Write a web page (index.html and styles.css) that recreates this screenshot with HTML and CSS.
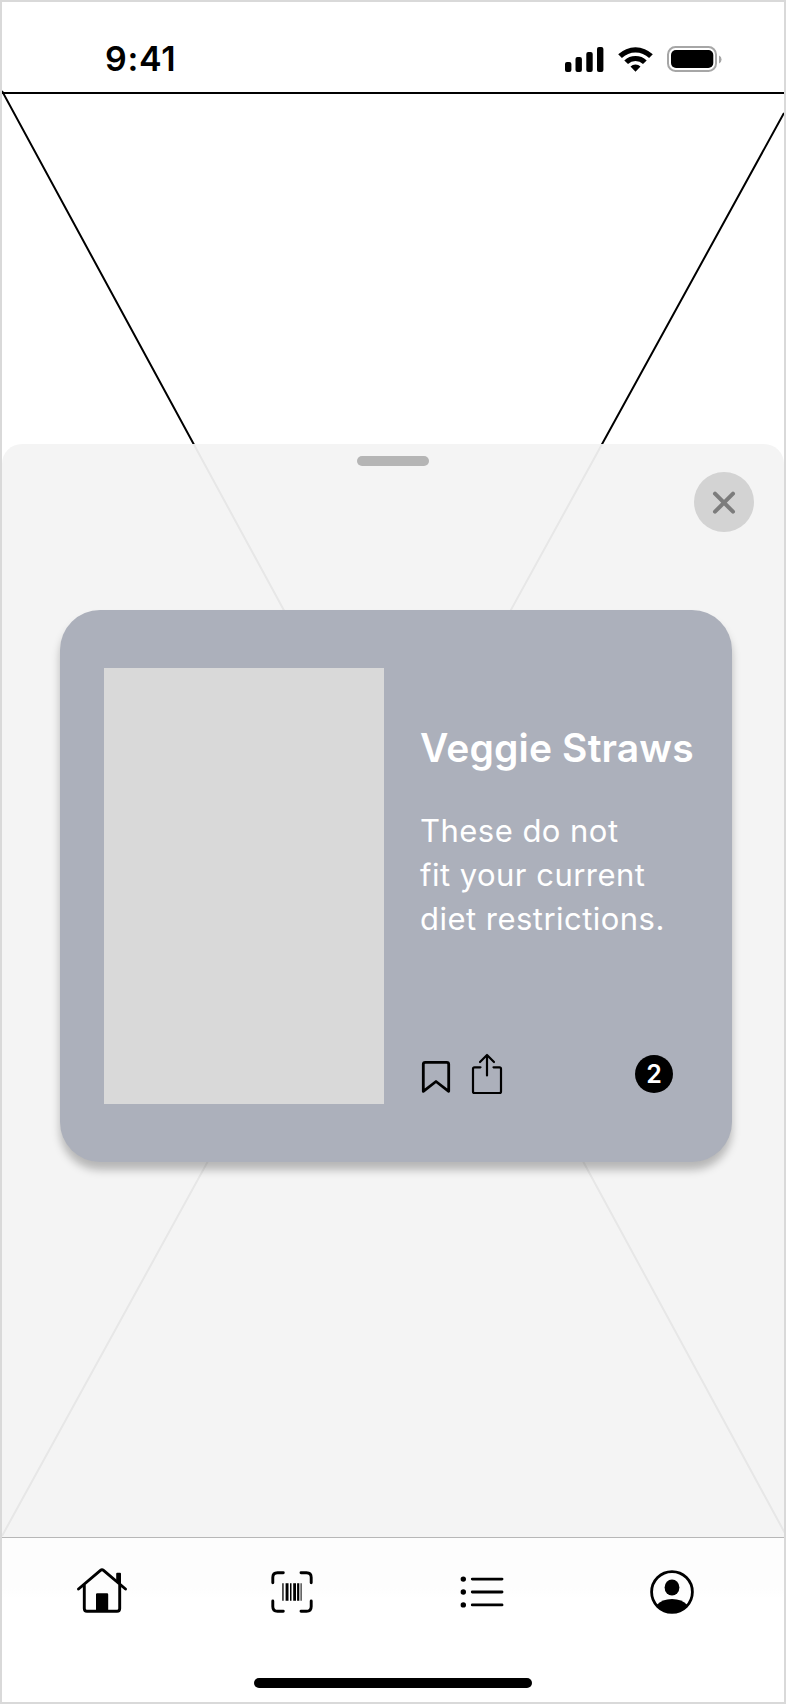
FILE: index.html
```html
<!DOCTYPE html>
<html lang="en">
<head>
<meta charset="utf-8">
<title>Scan result</title>
<link rel="stylesheet" href="styles.css">
</head>
<body>
<div class="phone">
  <svg class="backdrop" viewBox="2 2 782 1700" fill="none" stroke="#000" stroke-width="2">
    <path d="M2 93H784M2 91L787 1537M2 1536L784 113"/>
  </svg>
  <header class="status">
    <span class="time">9:41</span>
    <svg class="status-icons" width="160" height="30" viewBox="564 44 160 30">
      <rect x="565" y="62" width="6.4" height="10" rx="2"/>
      <rect x="575.5" y="57" width="6.4" height="15" rx="2"/>
      <rect x="586.3" y="52" width="6.4" height="20" rx="2"/>
      <rect x="597" y="47" width="6.4" height="25" rx="2"/>
      <path d="M618.2 54.3a25 25 0 0 1 34.6 0l-3.7 3.7a19.6 19.6 0 0 0-27.2 0zM624.3 60.4a16.2 16.2 0 0 1 22.4 0l-3.7 3.7a10.9 10.9 0 0 0-15 0zM630.5 66.4a7.5 7.5 0 0 1 10 0l-5 5.4z"/>
      <rect x="668" y="47" width="48" height="24" rx="7.5" fill="none" stroke="#a6a6a6" stroke-width="2"/>
      <rect x="671" y="50" width="42.3" height="18" rx="5"/>
      <path d="M719 55.5a4.4 4.4 0 0 1 0 8z" fill="#a6a6a6"/>
    </svg>
  </header>
  <main class="sheet">
    <div class="grabber"></div>
    <button class="close" aria-label="Close">
      <svg width="24" height="24" viewBox="0 0 24 24" stroke="#7c7c7c" stroke-width="4" stroke-linecap="round"><path d="M3 3.7L21 21.7M21 3.7L3 21.7"/></svg>
    </button>
    <article class="card">
      <div class="photo"></div>
      <div class="info">
        <h1 class="title">Veggie Straws</h1>
        <p class="text">These do not<br>fit your current<br>diet restrictions.</p>
        <div class="actions">
          <svg class="icon" width="82" height="42" viewBox="421 1053 82 42" fill="none" stroke="#000" stroke-linecap="round" stroke-linejoin="round">
            <path stroke-width="2.8" d="M423.3 1091.3V1064.3Q423.3 1062.3 425.3 1062.3H446.7Q448.7 1062.3 448.7 1064.3V1091.3L436 1081.5Z"/>
            <path stroke-width="2.2" d="M480.5 1067.3H474.5Q473 1067.3 473 1068.8V1091.5Q473 1093 474.5 1093H499.5Q501 1093 501 1091.5V1068.8Q501 1067.3 499.5 1067.3H493.5M487 1075.5V1055M480 1062L487 1055L494 1062"/>
          </svg>
          <span class="badge">2</span>
        </div>
      </div>
    </article>
  </main>
  <nav class="tabs">
    <svg class="tab" width="50" height="50" viewBox="77 1566 50 50" fill="none" stroke="#000" stroke-width="2.9" stroke-linecap="round" stroke-linejoin="round">
      <path d="M78.5 1589L100.5 1570.3Q102 1569 103.5 1570.3L125.5 1589M84.3 1584.5V1608.5Q84.3 1611.3 87 1611.3H117Q119.7 1611.3 119.7 1608.5V1584.5"/>
      <path fill="#000" stroke="none" d="M96 1594.5Q96 1593.3 97.2 1593.3H107Q108.2 1593.3 108.2 1594.5V1611.5H96ZM116.2 1573.7Q116.2 1572.7 117.2 1572.7H120Q121 1572.7 121 1573.7V1585L116.2 1581Z"/>
    </svg>
    <svg class="tab" width="50" height="50" viewBox="267 1566 50 50" fill="none" stroke="#000" stroke-width="2.9" stroke-linecap="round">
      <path d="M272.8 1582.8V1577.5Q272.8 1572.8 277.5 1572.8H283.3M301 1572.8H306.5Q311.2 1572.8 311.2 1577.5V1582.8M311.2 1601V1606.5Q311.2 1611.3 306.5 1611.3H301M283.3 1611.3H277.5Q272.8 1611.3 272.8 1606.5V1601"/>
      <path fill="#000" stroke="none" d="M282.3 1583.3h1.3v17.4h-1.3zM285.6 1583.3h2.9v17.4h-2.9zM290 1583.3h1.5v17.4h-1.5zM293.2 1583.3h2.8v17.4h-2.8zM297.1 1583.3h2.2v17.4h-2.2zM300.6 1583.3h1v17.4h-1z"/>
    </svg>
    <svg class="tab" width="50" height="50" viewBox="457 1566 50 50" stroke="#000" stroke-width="2.9" stroke-linecap="round">
      <path d="M472.3 1579.1H502M472.3 1592H502M472.3 1604.9H502"/>
      <g stroke="none"><circle cx="463.3" cy="1579.1" r="2.7"/><circle cx="463.3" cy="1592" r="2.7"/><circle cx="463.3" cy="1604.9" r="2.7"/></g>
    </svg>
    <svg class="tab" width="50" height="50" viewBox="647 1566 50 50">
      <circle cx="672" cy="1592" r="20.4" fill="none" stroke="#000" stroke-width="2.8"/>
      <ellipse cx="672" cy="1587.5" rx="7.4" ry="8.1"/>
      <path d="M656.5 1605.2Q662 1599 672 1599T687.5 1605.2A20.4 20.4 0 0 1 656.5 1605.2Z"/>
    </svg>
    <div class="home-indicator"></div>
  </nav>
</div>
</body>
</html>
```
FILE: styles.css
```css
* { box-sizing: border-box; }
body { margin: 0; font-family: Inter, "Liberation Sans", sans-serif; }
.phone {
  position: relative;
  display: flex;
  flex-direction: column;
  width: 786px;
  height: 1704px;
  border: 2px solid #d9d9d9;
  background: #fff;
  overflow: hidden;
}
.backdrop { position: absolute; inset: 0; width: 782px; height: 1700px; }
.status {
  position: relative;
  display: flex;
  justify-content: space-between;
  align-items: flex-start;
  height: 442px;
  padding: 42px 60px 0 103px;
}
.time { font-size: 34px; line-height: 30px; font-weight: 600; letter-spacing: .7px; }
.status-icons { display: block; }
.sheet {
  position: relative;
  display: flex;
  flex-direction: column;
  height: 1093px;
  padding: 12px 28px 0 58px;
  border-radius: 20px 20px 0 0;
  background: rgba(243, 243, 243, .95);
}
.grabber { width: 72px; height: 10px; margin-left: 297px; border-radius: 5px; background: #b5b5b5; }
.close {
  display: grid;
  place-items: center;
  align-self: flex-end;
  width: 60px;
  height: 60px;
  margin-top: 6px;
  margin-right: 2px;
  padding: 0;
  border: 0;
  border-radius: 50%;
  background: #d3d3d3;
}
.card {
  display: flex;
  gap: 36px;
  width: 672px;
  height: 552px;
  margin-top: 78px;
  padding: 58px 44px;
  border-radius: 40px;
  background: #acb0bb;
  box-shadow: 0 8px 8px rgba(0, 0, 0, .25);
}
.photo { flex: none; width: 280px; height: 436px; background: #d9d9d9; }
.info { flex: 1; min-width: 0; color: #fff; }
.title { margin: 56px 0 0; font-size: 39px; line-height: 48px; font-weight: 600; letter-spacing: .15px; white-space: nowrap; }
.text { margin: 37px 0 0; font-size: 31px; line-height: 44px; letter-spacing: .47px; white-space: nowrap; }
.actions { display: flex; align-items: center; justify-content: space-between; width: 252px; height: 42px; margin: 112px 0 0 1px; }
.badge {
  display: grid;
  place-items: center;
  width: 38px;
  height: 38px;
  border-radius: 50%;
  background: #000;
  font-size: 25px;
  line-height: 38px;
  font-weight: 600;
}
.tabs {
  position: relative;
  display: grid;
  grid-template-columns: repeat(4, 50px);
  grid-template-rows: 50px 10px;
  column-gap: 140px;
  row-gap: 62px;
  flex: 1;
  padding: 28px 75px 0;
  border-top: 1px solid #b7b7b7;
  background: linear-gradient(#fdfdfd 50px, #fff 60px);
}
.home-indicator { grid-column: 1 / -1; justify-self: center; width: 278px; height: 10px; margin-left: 12px; border-radius: 5px; background: #000; }
```
